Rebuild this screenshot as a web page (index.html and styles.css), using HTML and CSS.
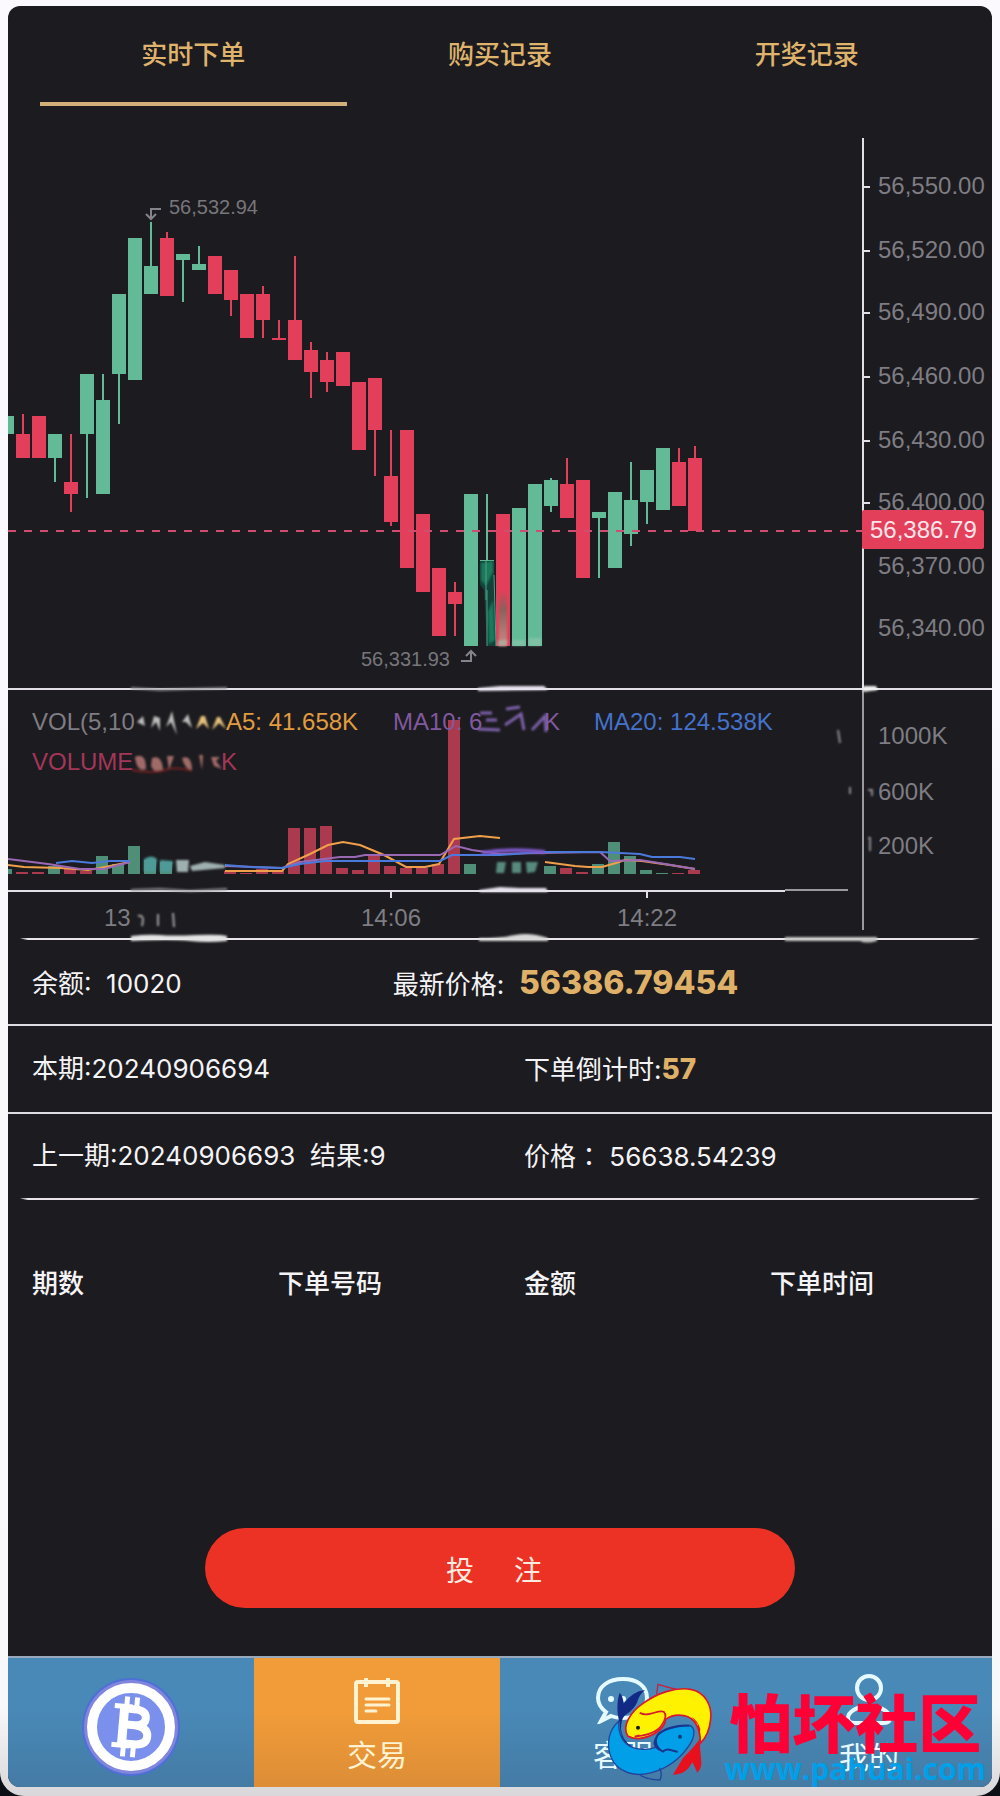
FILE: index.html
```
<!DOCTYPE html>
<html lang="zh-CN">
<head>
  <meta charset="UTF-8" />
  <meta name="viewport" content="width=device-width, initial-scale=1.0" />
  <title>实时下单</title>
  <link rel="stylesheet" href="styles.css">
</head>
<body>
  <div class="frame">
    <div class="screen">
      <nav class="tabs">
        <a href="#order" class="tab active">实时下单</a>
        <a href="#bought" class="tab">购买记录</a>
        <a href="#draws" class="tab">开奖记录</a>
      </nav>

      <svg class="chart" viewBox="8 106 984 847" role="img" aria-label="K线图">
        <defs>
          <filter id="soft" x="-10%" y="-50%" width="120%" height="200%"><feGaussianBlur stdDeviation="1" /></filter>
          <linearGradient id="fade" x1="0" y1="0" x2="0" y2="1">
            <stop offset="0" stop-color="#e43f5a" />
            <stop offset="0.35" stop-color="#8a6258" />
            <stop offset="1" stop-color="#c98a84" />
          </linearGradient>
        </defs>

        <!-- grid and axes -->
        <g class="axis">
          <path d="M8 689H992M8 891H785M863 138V690" />
          <path class="thin" d="M785 890H848M863 690V930" />
          <path id="ticks" d="" />
          <path d="M391 891V898M647 891V898" />
        </g>
        <path class="rule" d="M20 938.500L28 938H972L980 938.500L972 940H28Z" />

        <g id="candles"></g>
        <g id="volumes"></g>

        <!-- half-painted candle -->
        <rect x="480" y="560" width="14" height="1" fill="#62bb96" />
        <path d="M480 561H494L496 646H487L484 590L480 585Z" fill="#12423a" />
        <path d="M481 563L493 561V572L486 586L481 580ZM488 612L493 600L495 640L489 644Z" fill="#1a7a5c" filter="url(#soft)" />
        <path d="M486 561V600M494 575L496 646M487 590V646" stroke="#4f9f84" fill="none" />
        <rect x="499" y="590" width="8" height="56" fill="url(#fade)" filter="url(#soft)" />
        <path d="M498 640H508L506 646H497ZM513 640H525V646H512ZM529 638H541V646H529Z" fill="#9ec9b4" opacity="0.5" filter="url(#soft)" />

        <path class="last-line" d="M8 531H863" />

        <!-- moving averages -->
        <path class="ma5" d="M8 865L24 867L60 868L88 870L100 868L130 862M225 871H282L288 864L310 854L328 845L343 842L360 845L384 855L406 867H425L439 864L454 839L480 836L500 838M545 862L575 866L588 867L602 867L616 863L625 860L642 861L670 865L695 869" />
        <path class="ma10" d="M8 859L48 864L80 869L104 869L130 862M225 866L282 868L300 862L340 857H355L365 855H440L456 846L472 850L500 854L540 853L600 852L610 861L640 860L665 864L695 869" />
        <path class="ma20" d="M56 863L72 861L92 863L110 861H130M225 865L250 867L282 868L300 864L325 861H440L452 855H500L540 852H600L640 854L652 857H680L695 859" />

        <text class="label" x="32" y="730">VOL(5,10</text>
        <text class="label ma5-text" x="226" y="730">A5: 41.658K</text>
        <text class="label ma10-text" x="393" y="730">MA10: 6</text>
        <text class="label ma10-text" x="544" y="730">K</text>
        <text class="label ma20-text" x="594" y="730">MA20: 124.538K</text>
        <text class="label vol-text" x="32" y="770">VOLUME</text>
        <text class="label vol-text" x="221" y="770">K</text>

        <text class="label" x="104" y="926">13</text>
        <text class="label" x="361" y="926">14:06</text>
        <text class="label" x="617" y="926">14:22</text>

        <g class="label" id="priceLabels"></g>
        <text class="label" x="878" y="744">1000K</text>
        <text class="label" x="878" y="800">600K</text>
        <text class="label" x="878" y="854">200K</text>

        <rect x="862" y="510" width="122" height="39" rx="2" fill="#e43f5a" />
        <text class="label last-price" x="870" y="538">56,386.79</text>

        <!-- high and low markers -->
        <path class="marker" d="M161 209H151V219M146 214L151 219L156 214" />
        <text class="mark-text" x="169" y="214">56,532.94</text>
        <path class="marker" d="M461 661H471V651M466 656L471 651L476 656" />
        <text class="mark-text" x="361" y="666">56,331.93</text>

        <!-- smudges -->
        <g filter="url(#soft)">
          <path d="M131 936Q148 934 160 935T196 935T227 936V941Q208 943 190 941T131 941Z" fill="#e4e4e4" />
          <path d="M479 938Q500 938 515 935T548 938V941H479Z" fill="#d8d8d8" />
          <path d="M785 937H877V941Q866 944 860 941H785Z" fill="#c4c4c4" />
          <path d="M478 688L500 686H544L548 690L478 691ZM479 890L500 887L520 888L546 888L548 892L480 892Z" fill="#e6e2ee" />
          <path d="M131 688L160 690L190 689L227 688M131 890L160 889L190 891L227 889" stroke="#8b8b90" stroke-width="2" fill="none" />
          <path d="M863 686H876L878 690L863 692Z" fill="#f2f2f2" />
          <path d="M137 722L143 716L145 726ZM151 728L154 716L160 718V731L156 722ZM166 727L172 711L177 735L171 722ZM182 722L188 714L192 728L186 722Z" fill="#bcbcbc" />
          <path d="M196 729L201 716H205L209 729L203 723ZM212 730L217 717H220L226 729L219 723Z" fill="#e4c07c" />
          <path d="M135 757Q146 752 146 769Q137 773 135 757ZM152 758Q162 754 163 770Q154 774 151 766ZM167 756H174L169 770ZM182 758Q192 754 192 771Q184 768 182 758ZM199 755H203L202 770ZM211 757L220 757L216 761L222 769L214 766Z" fill="#a06a68" />
          <path d="M132 770Q155 774 165 770T192 771" stroke="#6a2020" stroke-width="2" fill="none" />
          <path d="M480 713H492M478 729L500 730M506 709L520 707M505 725L521 714L524 730M532 730L545 716L546 732M486 720H497" stroke="#7f62ad" stroke-width="3" fill="none" />
          <path d="M144 859Q152 854 157 859L155 872H144ZM160 860L173 861L171 872H160Z" fill="#4d9a98" />
          <path d="M176 860H189L188 872H177ZM190 866L205 862L225 865V868L192 871Z" fill="#9fb0b0" />
          <path d="M482 853Q510 848 545 852" stroke="#7e58c8" stroke-width="4" fill="none" />
          <path d="M497 862H506L504 873H496ZM512 862H521V873H512ZM526 862H538L535 872L527 873Z" fill="#568a7c" />
          <path d="M138 916Q145 914 142 926M158 914V926M173 913L174 927" stroke="#a0a0a0" stroke-width="2" fill="none" />
          <path d="M838 730L840 743M850 787V794M868 790H872V796M868 838H870V851" stroke="#8b8b90" stroke-width="2" fill="none" />
        </g>
      </svg>

      <section class="info">
        <div class="row price-row">
          <div class="col">余额:&nbsp; 10020</div>
          <div class="col">最新价格:&nbsp; <strong class="price">56386.79454</strong></div>
        </div>
        <div class="row">
          <div class="col">本期:20240906694</div>
          <div class="col">下单倒计时:<strong class="count">57</strong></div>
        </div>
        <div class="row">
          <div class="col">上一期:20240906693&nbsp; 结果:9</div>
          <div class="col">价格<span class="colon" lang="zh-TW">：</span> 56638.54239</div>
        </div>
        <svg class="divider" viewBox="0 0 984 2" preserveAspectRatio="none"><path class="rule" d="M12 0.500L20 0H964L972 0.500L964 2H20Z" /></svg>
      </section>

      <table class="orders">
        <thead>
          <tr><th>期数</th><th>下单号码</th><th>金额</th><th>下单时间</th></tr>
        </thead>
        <tbody></tbody>
      </table>

      <div class="action">
        <button class="bet" type="button"><span>投</span><span>注</span></button>
      </div>

      <nav class="bottom-nav">
        <a href="#home" class="nav-item" aria-label="首页">
          <svg width="100" height="100" viewBox="0 0 100 100">
            <circle cx="50" cy="50" r="49" fill="#4f6fd8" />
            <circle cx="50" cy="50" r="47" fill="#8186dc" />
            <circle cx="50" cy="50" r="39" fill="#7a90ec" stroke="#fff" stroke-width="10" />
            <g transform="rotate(5 50 50)" fill="none" stroke="#fff">
              <path stroke-width="5" d="M44 20V30M54 20V30M44 70V80M54 70V80" />
              <path stroke-width="5" d="M32 30H50M32 69H50" />
              <path stroke-width="9" d="M42 29V70" />
              <path stroke-width="8" d="M42 32H54Q64 33 64 40T54 48H42M54 48Q67 49 67 58T54 67H42" />
            </g>
          </svg>
        </a>
        <a href="#trade" class="nav-item current">
          <svg width="48" height="48" viewBox="0 0 48 48" fill="none" stroke="currentColor" stroke-width="4">
            <rect x="3" y="6" width="42" height="40" rx="2" />
            <path d="M13 2V11M35 2V11" />
            <path d="M13 23H36M13 29H36M13 35H23" stroke-width="3" stroke-linecap="round" />
          </svg>
          交易
        </a>
        <a href="#service" class="nav-item">
          <svg width="54" height="48" viewBox="0 0 54 48" fill="none" stroke="currentColor" stroke-width="4">
            <path d="M10 36Q2 30 2 22C2 10 13 3 27 3S51 10 51 22S41 42 27 42Q20 42 15 40L5 45Z" />
            <circle cx="15" cy="23" r="3" fill="currentColor" stroke="none" />
            <circle cx="27" cy="23" r="3" fill="currentColor" stroke="none" />
            <circle cx="39" cy="23" r="3" fill="currentColor" stroke="none" />
          </svg>
          客服
        </a>
        <a href="#mine" class="nav-item">
          <svg width="48" height="52" viewBox="0 0 48 52" fill="none" stroke="currentColor" stroke-width="4">
            <circle cx="24" cy="14" r="12" />
            <path d="M24 32C36 32 45 38 45 44Q45 49 39 49H9Q3 49 3 44C3 38 12 32 24 32Z" />
          </svg>
          我的
        </a>

        <div class="brand">
          <svg class="brand-logo" width="140" height="120" viewBox="0 0 420 360">
            <path d="M203 84L207 55Q235 64 263 70" fill="none" stroke="#c8203a" stroke-width="4" />
            <path d="M116 210C98 180 124 138 162 112C204 82 258 62 305 70C348 78 370 118 365 160C362 192 350 216 334 232C335 188 318 155 285 149C262 144 244 150 230 160C228 180 205 210 150 218Q130 218 116 210Z" fill="#fff200" stroke="#d8192f" stroke-width="5" />
            <path d="M152 140C178 156 204 130 224 137C234 146 230 160 218 178C206 196 180 208 137 212L152 208" fill="none" stroke="#d8192f" stroke-width="5" />
            <path d="M306 152Q328 164 334 190L330 222Q318 240 282 276L252 326Q292 326 310 288L325 320Q338 306 337 290L331 215L326 174Z" fill="#e8101c" />
            <path d="M89 166C60 192 50 232 66 274C84 320 140 334 188 320C238 306 276 276 302 236C320 208 318 184 302 178C276 180 230 184 208 206C198 220 200 230 200 244C174 254 136 252 112 234C92 216 88 194 89 166Z" fill="#009fe8" stroke="#23459c" stroke-width="4" />
            <path d="M301 179C264 176 226 188 208 204C192 224 204 248 222 257C232 244 250 254 266 258M204 212Q186 238 213 252" fill="none" stroke="#17378f" stroke-width="6" />
            <path d="M92 170C84 146 82 108 92 80Q102 90 104 113Q130 76 168 72Q150 86 145 108Q134 132 108 148Q96 160 96 188Q98 222 130 242Q94 232 92 170Z" fill="#122a86" />
            <path d="M154 328Q180 342 213 342Q221 325 212 305" fill="none" stroke="#23459c" stroke-width="4" />
            <circle cx="147" cy="185" r="6" fill="#17171c" />
            <circle cx="273" cy="212" r="6" fill="#173d78" />
          </svg>
          <div class="brand-text">
            <span class="brand-name">怕坏社区</span>
            <span class="brand-url">www.pahuai.com</span>
          </div>
        </div>
      </nav>
    </div>
  </div>

  <script>
    const NS = 'http://www.w3.org/2000/svg';
    const up = '#62bb96';
    const down = '#e43f5a';

    // [direction, body top, body bottom, wick top, wick bottom]
    const candles = [
      ['u', 416, 434, 416, 434], ['d', 434, 458, 414, 458], ['d', 416, 458, 416, 458], ['u', 434, 458, 434, 482],
      ['d', 482, 494, 434, 512], ['u', 374, 434, 374, 498], ['u', 400, 494, 374, 494], ['u', 294, 374, 294, 424],
      ['u', 238, 380, 238, 380], ['u', 266, 294, 222, 294], ['d', 238, 296, 232, 296], ['u', 254, 260, 254, 302],
      ['u', 264, 270, 246, 270], ['d', 256, 294, 256, 294], ['d', 270, 300, 270, 316], ['d', 294, 338, 294, 338],
      ['d', 294, 320, 286, 338], ['d', 338, 340, 320, 340], ['d', 320, 360, 256, 360], ['d', 350, 372, 342, 398],
      ['d', 360, 382, 352, 392], ['d', 352, 386, 352, 386], ['d', 382, 450, 382, 450], ['d', 378, 430, 378, 476],
      ['d', 476, 522, 430, 526], ['d', 430, 568, 430, 568], ['d', 514, 592, 514, 592], ['d', 568, 636, 568, 636],
      ['d', 592, 604, 582, 636], ['u', 494, 646, 494, 646], ['u', 560, 561, 494, 600], ['d', 514, 646, 514, 646],
      ['u', 508, 646, 508, 646], ['u', 484, 646, 484, 646], ['u', 480, 506, 478, 512], ['d', 484, 518, 458, 518],
      ['d', 480, 578, 480, 578], ['u', 512, 518, 512, 578], ['u', 492, 568, 492, 568], ['u', 500, 534, 462, 546],
      ['u', 470, 502, 470, 524], ['u', 448, 510, 448, 510], ['d', 462, 506, 448, 506], ['d', 458, 531, 446, 531]
    ];

    // bar heights in the same slots as the candles, negative = falling
    const volumes = [
      5, -2, -2, 8, -6, -3, 18, 10, 28, 14, 12, 0, 0, 0, -3, -1, -5, -4, -46, -46, -48, -6, -4, -18,
      -8, -6, -6, -10, -154, 10, 0, 0, 0, 0, 8, -6, -2, 10, 32, 18, 4, 1, -1, -4
    ];

    function add(parent, tag, attrs) {
      const el = document.createElementNS(NS, tag);
      for (const key in attrs) el.setAttribute(key, attrs[key]);
      parent.appendChild(el);
      return el;
    }

    const candleGroup = document.getElementById('candles');
    candles.forEach(([dir, top, bottom, high, low], i) => {
      const x = i * 16;
      const fill = dir === 'u' ? up : down;
      add(candleGroup, 'rect', { x: x + 6, y: high, width: 2, height: low - high, fill });
      add(candleGroup, 'rect', { x, y: top, width: 14, height: bottom - top, fill });
    });

    const volumeGroup = document.getElementById('volumes');
    volumes.forEach((v, i) => {
      const h = Math.abs(v);
      add(volumeGroup, 'rect', { x: i * 16, y: 874 - h, width: 12, height: h, fill: v > 0 ? '#4f8f78' : '#ac3a4e' });
    });

    const prices = [['56,550.00', 187], ['56,520.00', 251], ['56,490.00', 313], ['56,460.00', 377],
      ['56,430.00', 441], ['56,400.00', 503], ['56,370.00', 567], ['56,340.00', 629]];
    const priceLabels = document.getElementById('priceLabels');
    let ticks = '';
    prices.forEach(([text, y], i) => {
      add(priceLabels, 'text', { x: 878, y: y + 7 }).textContent = text;
      if (i < 6) ticks += `M863 ${y}H870`;
    });
    document.getElementById('ticks').setAttribute('d', ticks);
  </script>
</body>
</html>
```
FILE: styles.css
```
* { box-sizing: border-box; }
body {
  margin: 0;
  background: #0c0f16;
  color: #f4f3f5;
  font-family: Inter, "Noto Sans CJK SC", sans-serif;
  font-size: 26px;
}
a { color: inherit; text-decoration: none; }
.frame {
  min-height: 100vh;
  display: flex;
  padding: 6px 8px 9px;
  background: linear-gradient(#fbf9fe 0%, #f8f8fa 95%, #d9d7d9 100%);
  border-radius: 0 0 24px 24px;
}
.screen {
  flex: 1;
  min-width: 0;
  display: flex;
  flex-direction: column;
  background: #1c1b1f;
  border-radius: 12px;
  overflow: hidden;
}

/* Top tabs */
.tabs {
  display: grid;
  grid-template-columns: repeat(3, 1fr);
  padding: 0 32px;
  color: #dfb36c;
  font-weight: 500;
}
.tab {
  height: 100px;
  display: flex;
  align-items: center;
  justify-content: center;
  padding-bottom: 4px;
  border-bottom: 4px solid transparent;
}
.tab.active { border-color: #d3b07a; }

/* Chart */
.chart {
  display: block;
  width: 100%;
  margin-bottom: -13px;
  font-family: "Liberation Sans", Arial, sans-serif;
}
.axis path { fill: none; stroke: #e2e0e6; stroke-width: 2; }
.axis .thin { stroke: #9a9a9e; }
.rule { fill: #e8e4ea; }
.label { font-size: 24px; fill: #7e7d83; }
.mark-text { font-size: 20px; fill: #77767c; }
.marker { fill: none; stroke: #85848a; stroke-width: 2; }
.last-line { stroke: #d04c70; stroke-width: 2; stroke-dasharray: 8 8; }
.last-price { fill: #fbe6ea; }
.ma5, .ma10, .ma20 { fill: none; stroke-width: 2; }
.ma5 { stroke: #f0a04a; }
.ma10 { stroke: #9a68b4; }
.ma20 { stroke: #4a7adc; }
.ma5-text { fill: #e29c40; }
.ma10-text { fill: #80599f; }
.ma20-text { fill: #4472cb; }
.vol-text { fill: #a33659; }

/* Order info */
.row {
  display: grid;
  grid-template-columns: 1fr 1fr;
  align-items: center;
  height: 88px;
  line-height: 32px;
}
.row + .row { border-top: 2px solid #dddce2; }
.price-row {
  grid-template-columns: 11fr 19fr;
  height: 84px;
  padding-top: 4px;
}
.row:nth-child(3) { height: 86px; }
.col { padding-left: 24px; white-space: nowrap; }
.price { font-size: 32px; font-weight: 800; color: #dfb168; }
.count { font-size: 28px; font-weight: 800; color: #dfb168; }
.colon { font-family: "Noto Sans CJK TC", sans-serif; }
.divider { display: block; width: 100%; height: 2px; }

.orders {
  width: 100%;
  margin-top: 64px;
  border-collapse: collapse;
  table-layout: fixed;
}
.orders th {
  padding: 0 0 0 24px;
  line-height: 40px;
  font-weight: 500;
  text-align: left;
}

.action {
  flex: 1;
  display: flex;
  align-items: flex-end;
  justify-content: center;
  padding: 40px 0 48px;
}
.bet {
  width: 60%;
  height: 80px;
  display: flex;
  align-items: center;
  justify-content: center;
  gap: 40px;
  padding: 2px 12px 0 0;
  border: 0;
  border-radius: 40px;
  background: #ec3225;
  color: #fdebe0;
  font: inherit;
  font-size: 28px;
}

/* Bottom navigation */
.bottom-nav {
  position: relative;
  display: grid;
  grid-template-columns: repeat(4, 1fr);
  height: 131px;
  border-top: 2px solid #98a9bc;
  background: linear-gradient(#4989b7 40%, #447ba5);
}
.nav-item {
  display: flex;
  flex-direction: column;
  align-items: center;
  justify-content: center;
  gap: 8px;
  padding-top: 8px;
  color: #e6fbff;
  font-size: 30px;
  line-height: 46px;
}
.nav-item.current { background: linear-gradient(#f29c39 40%, #dc8d36); color: #fff3d2; }

/* Site mark laid over the navigation */
.brand {
  position: absolute;
  right: 6px;
  bottom: 1px;
  display: flex;
  align-items: flex-end;
  pointer-events: none;
}
.brand-text {
  display: flex;
  flex-direction: column;
  align-items: center;
  margin-left: -4px;
}
.brand-name {
  color: #ff0036;
  font-size: 63px;
  font-weight: 900;
  line-height: 56px;
}
.brand-url {
  color: #009fe8;
  font-family: "Open Sans", sans-serif;
  font-size: 30px;
  font-weight: 700;
  line-height: 34px;
}
```
